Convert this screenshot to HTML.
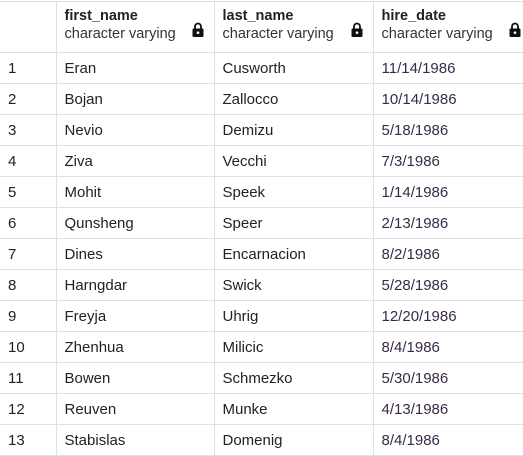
<!DOCTYPE html><html><head><style>
body{margin:0;width:523px;height:453px;overflow:hidden;background:#fff;font-family:"Liberation Sans",sans-serif;color:#222}
table{border-collapse:collapse;table-layout:fixed;position:absolute;left:0;top:1px;width:540px}
td,th{border:1px solid #dee0e6;padding:0 0 0 8px;font-size:15px;white-space:nowrap;overflow:hidden;text-align:left}
th{height:50px;font-weight:normal;position:relative;vertical-align:top}
th b{display:block;margin-top:6px;font-size:14.5px;color:#222}
th span{display:block;margin-top:2px;color:#333;font-size:14.5px}
td{height:30px}
td:first-child,th:first-child{border-left:none}
td.d{color:#3a2a48}
.lk{position:absolute;right:10px;top:20px}
</style></head><body>
<table>
<colgroup><col style="width:56px"><col style="width:158px"><col style="width:159px"><col style="width:167px"></colgroup>
<tr><th></th>
<th><b>first_name</b><span>character varying</span><svg class="lk" width="12" height="15" viewBox="0 0 12 15"><path d="M3 7V4.5a3 3 0 0 1 6 0V7" fill="none" stroke="#111" stroke-width="1.8"/><rect x="0.5" y="6.5" width="11" height="8.5" rx="1" fill="#111"/><circle cx="6" cy="10.7" r="1.3" fill="#fff"/></svg></th>
<th><b>last_name</b><span>character varying</span><svg class="lk" width="12" height="15" viewBox="0 0 12 15"><path d="M3 7V4.5a3 3 0 0 1 6 0V7" fill="none" stroke="#111" stroke-width="1.8"/><rect x="0.5" y="6.5" width="11" height="8.5" rx="1" fill="#111"/><circle cx="6" cy="10.7" r="1.3" fill="#fff"/></svg></th>
<th><b>hire_date</b><span>character varying</span><svg class="lk" style="right:19px" width="12" height="15" viewBox="0 0 12 15"><path d="M3 7V4.5a3 3 0 0 1 6 0V7" fill="none" stroke="#111" stroke-width="1.8"/><rect x="0.5" y="6.5" width="11" height="8.5" rx="1" fill="#111"/><circle cx="6" cy="10.7" r="1.3" fill="#fff"/></svg></th></tr>
<tr><td>1</td><td>Eran</td><td>Cusworth</td><td class="d">11/14/1986</td></tr>
<tr><td>2</td><td>Bojan</td><td>Zallocco</td><td class="d">10/14/1986</td></tr>
<tr><td>3</td><td>Nevio</td><td>Demizu</td><td class="d">5/18/1986</td></tr>
<tr><td>4</td><td>Ziva</td><td>Vecchi</td><td class="d">7/3/1986</td></tr>
<tr><td>5</td><td>Mohit</td><td>Speek</td><td class="d">1/14/1986</td></tr>
<tr><td>6</td><td>Qunsheng</td><td>Speer</td><td class="d">2/13/1986</td></tr>
<tr><td>7</td><td>Dines</td><td>Encarnacion</td><td class="d">8/2/1986</td></tr>
<tr><td>8</td><td>Harngdar</td><td>Swick</td><td class="d">5/28/1986</td></tr>
<tr><td>9</td><td>Freyja</td><td>Uhrig</td><td class="d">12/20/1986</td></tr>
<tr><td>10</td><td>Zhenhua</td><td>Milicic</td><td class="d">8/4/1986</td></tr>
<tr><td>11</td><td>Bowen</td><td>Schmezko</td><td class="d">5/30/1986</td></tr>
<tr><td>12</td><td>Reuven</td><td>Munke</td><td class="d">4/13/1986</td></tr>
<tr><td>13</td><td>Stabislas</td><td>Domenig</td><td class="d">8/4/1986</td></tr>
</table>
</body></html>
